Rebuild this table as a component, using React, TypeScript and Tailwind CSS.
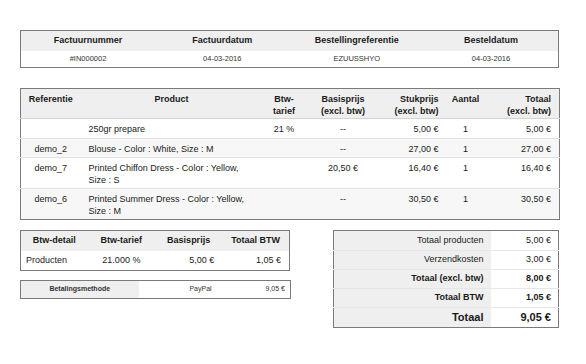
import React from 'react';

interface Line {
  ref: string;
  product: string[];
  rate: string;
  base: string;
  unit: string;
  qty: string;
  total: string;
}

const lines: Line[] = [
  { ref: '', product: ['250gr prepare'], rate: '21 %', base: '--', unit: '5,00 €', qty: '1', total: '5,00 €' },
  { ref: 'demo_2', product: ['Blouse - Color : White, Size : M'], rate: '', base: '--', unit: '27,00 €', qty: '1', total: '27,00 €' },
  { ref: 'demo_7', product: ['Printed Chiffon Dress - Color : Yellow,', 'Size : S'], rate: '', base: '20,50 €', unit: '16,40 €', qty: '1', total: '16,40 €' },
  { ref: 'demo_6', product: ['Printed Summer Dress - Color : Yellow,', 'Size : M'], rate: '', base: '--', unit: '30,50 €', qty: '1', total: '30,50 €' },
];

const totals = [
  { label: 'Totaal producten', value: '5,00 €', bold: false, h: 'h-[20px]' },
  { label: 'Verzendkosten', value: '3,00 €', bold: false, h: 'h-[19px]' },
  { label: 'Totaal (excl. btw)', value: '8,00 €', bold: true, h: 'h-[19px]' },
  { label: 'Totaal BTW', value: '1,05 €', bold: true, h: 'h-[19px]' },
];

const App: React.FC = () => {
  return (
    <div className="min-h-screen bg-white font-['Liberation_Sans',Arial,sans-serif] text-[#1a1a1a] pt-[30px] pl-[20px]">
      <div className="w-[539px]">
        {/* invoice header */}
        <table className="w-full table-fixed border-collapse border border-[#7a7a7a]">
          <thead>
            <tr className="h-[20px] bg-[#efefef]">
              <th className="p-0 text-[9px] font-bold text-center">Factuurnummer</th>
              <th className="p-0 text-[9px] font-bold text-center">Factuurdatum</th>
              <th className="p-0 text-[9px] font-bold text-center">Bestellingreferentie</th>
              <th className="p-0 text-[9px] font-bold text-center">Besteldatum</th>
            </tr>
          </thead>
          <tbody>
            <tr className="h-[17px]">
              <td className="p-0 text-[7.5px] text-center text-[#333]">#IN000002</td>
              <td className="p-0 text-[7.5px] text-center text-[#333]">04-03-2016</td>
              <td className="p-0 text-[7.5px] text-center text-[#333]">EZUUSSHYO</td>
              <td className="p-0 text-[7.5px] text-center text-[#333]">04-03-2016</td>
            </tr>
          </tbody>
        </table>

        {/* products */}
        <table className="mt-[20px] w-full table-fixed border-collapse border border-[#7a7a7a] text-[9px] leading-[12px]">
          <colgroup>
            <col className="w-[60px]" />
            <col className="w-[182px]" />
            <col className="w-[43px]" />
            <col className="w-[75px]" />
            <col className="w-[65px]" />
            <col className="w-[40px]" />
            <col className="w-[74px]" />
          </colgroup>
          <thead>
            <tr className="h-[30px] bg-[#efefef] border-b border-[#d4d4d4] align-top">
              <th className="px-0 pt-[4px] font-bold text-center">Referentie</th>
              <th className="px-0 pt-[4px] font-bold text-center">Product</th>
              <th className="px-0 pt-[4px] font-bold text-center">Btw-<br />tarief</th>
              <th className="px-0 pt-[4px] font-bold text-center">Basisprijs<br />(excl. btw)</th>
              <th className="pl-0 pr-[7px] pt-[4px] font-bold text-right">Stukprijs<br />(excl. btw)</th>
              <th className="px-0 pt-[4px] font-bold text-center">Aantal</th>
              <th className="pl-0 pr-[8px] pt-[4px] font-bold text-right">Totaal<br />(excl. btw)</th>
            </tr>
          </thead>
          <tbody>
            {lines.map((l, i) => (
              <tr
                key={i}
                className={`align-top border-t border-[#e2e2e2] ${i % 2 === 1 ? 'bg-[#f7f7f7]' : 'bg-white'} ${l.product.length > 1 ? 'h-[31px]' : i === 0 ? 'h-[20px]' : 'h-[19px]'}`}
              >
                <td className="px-0 pt-[4px] text-center">{l.ref}</td>
                <td className="pl-[8px] pr-0 pt-[4px]">
                  {l.product.map((p, j) => (
                    <div key={j}>{p}</div>
                  ))}
                </td>
                <td className="px-0 pt-[4px] text-center">{l.rate}</td>
                <td className="px-0 pt-[4px] text-center">{l.base}</td>
                <td className="pl-0 pr-[7px] pt-[4px] text-right">{l.unit}</td>
                <td className="px-0 pt-[4px] text-center">{l.qty}</td>
                <td className="pl-0 pr-[8px] pt-[4px] text-right">{l.total}</td>
              </tr>
            ))}
          </tbody>
        </table>

        <div className="mt-[10px] flex justify-between items-start">
          <div className="w-[270px]">
            {/* tax detail */}
            <table className="w-full table-fixed border-collapse border border-[#7a7a7a] text-[9px]">
              <thead>
                <tr className="h-[20px] bg-[#efefef]">
                  <th className="p-0 font-bold text-center">Btw-detail</th>
                  <th className="p-0 font-bold text-center">Btw-tarief</th>
                  <th className="p-0 font-bold text-center">Basisprijs</th>
                  <th className="p-0 font-bold text-center">Totaal BTW</th>
                </tr>
              </thead>
              <tbody>
                <tr className="h-[20px]">
                  <td className="pl-[5px] pr-0 py-0">Producten</td>
                  <td className="p-0 text-center">21.000 %</td>
                  <td className="pl-0 pr-[8px] py-0 text-right">5,00 €</td>
                  <td className="pl-0 pr-[8px] py-0 text-right">1,05 €</td>
                </tr>
              </tbody>
            </table>

            {/* payment */}
            <table className="mt-[9px] w-full table-fixed border-collapse border border-[#7a7a7a] text-[7px] text-[#333]">
              <colgroup>
                <col className="w-[118px]" />
                <col className="w-[124px]" />
                <col className="w-[28px]" />
              </colgroup>
              <tbody>
                <tr className="h-[18px]">
                  <td className="p-0 bg-[#efefef] font-bold text-center">Betalingsmethode</td>
                  <td className="p-0 text-center">PayPal</td>
                  <td className="pl-0 pr-[5px] py-0 text-right whitespace-nowrap">9,05 €</td>
                </tr>
              </tbody>
            </table>
          </div>

          {/* totals */}
          <table className="w-[225px] table-fixed border-collapse border border-[#7a7a7a] text-[9px]">
            <colgroup>
              <col className="w-[157px]" />
              <col className="w-[68px]" />
            </colgroup>
            <tbody>
              {totals.map((t, i) => (
                <tr key={i} className={`${t.h} ${i > 0 ? 'border-t border-[#e6e6e6]' : ''}`}>
                  <td className={`pl-0 pr-[7px] py-0 bg-[#efefef] text-right ${t.bold ? 'font-bold' : ''}`}>{t.label}</td>
                  <td className={`pl-0 pr-[7px] py-0 text-right ${t.bold ? 'font-bold' : ''}`}>{t.value}</td>
                </tr>
              ))}
              <tr className="h-[20px] border-t border-[#e6e6e6]">
                <td className="pl-0 pr-[7px] py-0 bg-[#efefef] text-right text-[11px] font-bold">Totaal</td>
                <td className="pl-0 pr-[7px] py-0 text-right text-[11px] font-bold">9,05 €</td>
              </tr>
            </tbody>
          </table>
        </div>
      </div>
    </div>
  );
};

export default App;
